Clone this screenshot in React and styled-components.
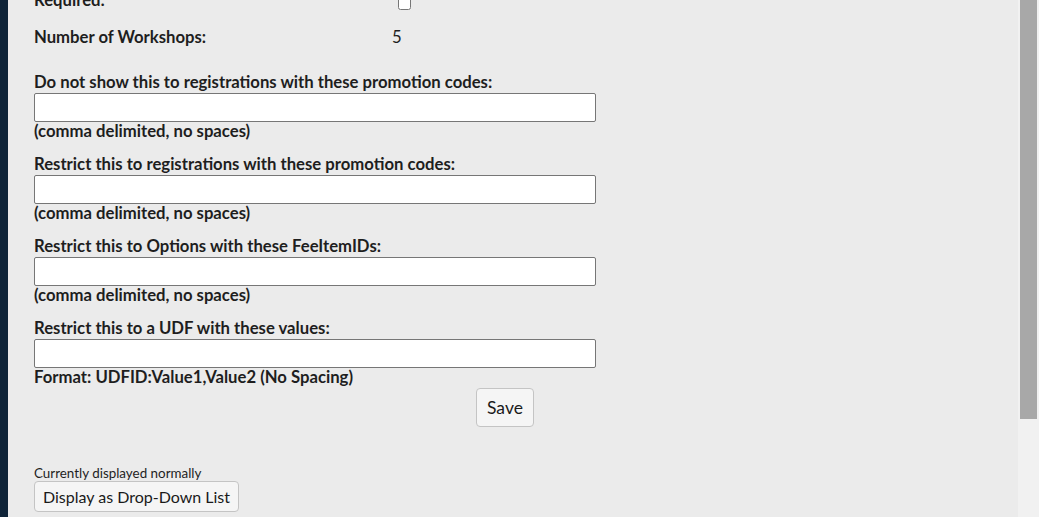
import React from "react";
import styled, { createGlobalStyle } from "styled-components";

const GlobalStyle = createGlobalStyle`
  html, body {
    margin: 0;
    padding: 0;
    overflow: hidden;
  }
  body {
    font-family: Lato, "Liberation Sans", sans-serif;
    color: #1e1e1e;
  }
`;

const Page = styled.div`
  display: flex;
  width: 1039px;
  height: 517px;
  overflow: hidden;
`;

const SideStrip = styled.div`
  width: 8px;
  background-color: #0f2438;
  flex-shrink: 0;
`;

const Main = styled.div`
  flex: 1;
  background-color: #ebebeb;
  padding-left: 26px;
  overflow: hidden;
`;

const Content = styled.div`
  margin-top: -9px;
`;

const InfoRow = styled.div`
  display: grid;
  grid-template-columns: 358px auto;
  height: 37px;
  font-size: 16.7px;
  font-weight: bold;
  line-height: 19px;
`;

const InfoValue = styled.div`
  font-weight: normal;
  display: flex;
  align-items: ${(p) => (p.$check ? "flex-end" : "flex-start")};
  height: ${(p) => (p.$check ? "19px" : "auto")};
`;

const Check = styled.input`
  width: 13px;
  height: 13px;
  margin: 0 0 0 6px;
`;

const Sections = styled.div`
  margin-top: 8px;
  display: flex;
  flex-direction: column;
  gap: 14px;
`;

const Section = styled.div`
  display: flex;
  flex-direction: column;
`;

const Label = styled.div`
  font-size: 16.7px;
  font-weight: bold;
  line-height: 19px;
  margin-bottom: 1px;
`;

const TextBox = styled.input`
  box-sizing: border-box;
  width: 562px;
  height: 29px;
  border: 1px solid #767676;
  border-radius: 2px;
  background: #fff;
  margin: 0;
  padding: 0 4px;
`;

const Hint = styled.div`
  font-size: 16.7px;
  font-weight: bold;
  line-height: 19px;
`;

const SaveRow = styled.div`
  padding-left: 442px;
  margin-top: 1px;
`;

const Button = styled.button`
  font-family: Lato, "Liberation Sans", sans-serif;
  font-size: ${(p) => p.$fs}px;
  color: #1a1a1a;
  background-color: #f5f5f5;
  border: 1px solid #c4c4c4;
  border-radius: 4px;
  height: ${(p) => p.$h}px;
  padding: 0 ${(p) => p.$px}px;
  margin: 0;
`;

const Footer = styled.div`
  margin-top: 38px;
  display: flex;
  flex-direction: column;
  align-items: flex-start;
`;

const SmallNote = styled.div`
  font-size: 13.4px;
  line-height: 16px;
`;

const ScrollTrack = styled.div`
  width: 21px;
  flex-shrink: 0;
  background-color: #f1f1f1;
  display: flex;
  justify-content: center;
`;

const ScrollThumb = styled.div`
  width: 17px;
  height: 419px;
  background-color: #a8a8a8;
`;

const sections = [
  { label: "Do not show this to registrations with these promotion codes:", hint: "(comma delimited, no spaces)" },
  { label: "Restrict this to registrations with these promotion codes:", hint: "(comma delimited, no spaces)" },
  { label: "Restrict this to Options with these FeeItemIDs:", hint: "(comma delimited, no spaces)" },
  { label: "Restrict this to a UDF with these values:", hint: "Format: UDFID:Value1,Value2 (No Spacing)" },
];

export default function App() {
  return (
    <Page>
      <GlobalStyle />
      <SideStrip />
      <Main>
        <Content>
          <InfoRow>
            <div>Required:</div>
            <InfoValue $check>
              <Check type="checkbox" />
            </InfoValue>
          </InfoRow>
          <InfoRow>
            <div>Number of Workshops:</div>
            <InfoValue>5</InfoValue>
          </InfoRow>
          <Sections>
            {sections.map((s) => (
              <Section key={s.label}>
                <Label>{s.label}</Label>
                <TextBox type="text" />
                <Hint>{s.hint}</Hint>
              </Section>
            ))}
          </Sections>
          <SaveRow>
            <Button $h={39} $px={10} $fs={17.5}>Save</Button>
          </SaveRow>
          <Footer>
            <SmallNote>Currently displayed normally</SmallNote>
            <Button $h={31} $px={8} $fs={16}>Display as Drop-Down List</Button>
          </Footer>
        </Content>
      </Main>
      <ScrollTrack>
        <ScrollThumb />
      </ScrollTrack>
    </Page>
  );
}
